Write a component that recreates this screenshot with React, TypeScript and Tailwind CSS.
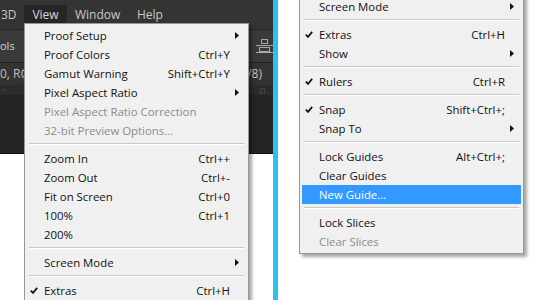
import React from "react";

type Item =
  | { sep: true }
  | {
      sep?: false;
      label: string;
      shortcut?: string;
      arrow?: boolean;
      check?: boolean;
      disabled?: boolean;
      active?: boolean;
    };

const Check = () => (
  <svg width="8" height="7" viewBox="0 0 8 7" className="block">
    <path d="M0.8 3.6 L3 5.9 L7.2 0.9" fill="none" stroke="#111" strokeWidth="1.7" />
  </svg>
);

const Arrow = ({ color }: { color: string }) => (
  <svg width="4" height="7" viewBox="0 0 4 7" className="block">
    <polygon points="0,0 4,3.5 0,7" fill={color} />
  </svg>
);

function MenuRow({ item }: { item: Item }) {
  if (item.sep) {
    return (
      <div className="h-[9px] px-[2px] pt-[3px]">
        <div className="h-[2px] border-t border-[#c8c8c8] border-b border-b-white" />
      </div>
    );
  }
  const color = item.active ? "text-white" : item.disabled ? "text-[#8c8c8c]" : "text-[#111]";
  return (
    <div
      className={`relative flex h-[19px] items-center ${item.active ? "bg-[#3399ff]" : ""} ${color}`}
    >
      <div className="flex w-[17px] justify-end pr-[6px]">{item.check ? <Check /> : null}</div>
      <span className="flex-1 whitespace-nowrap">{item.label}</span>
      {item.shortcut ? <span className="mr-[16px] whitespace-nowrap">{item.shortcut}</span> : null}
      {item.arrow ? (
        <span className="mr-[7px]">
          <Arrow color={item.active ? "#fff" : "#111"} />
        </span>
      ) : null}
    </div>
  );
}

function Menu({ items }: { items: Item[] }) {
  return (
    <div
      className="w-[225px] border border-[#979797] bg-[#f0f0f0] p-[2px] text-[11.4px] shadow-[3px_3px_3px_rgba(0,0,0,0.35)]"
      style={{ fontFamily: '"Open Sans", "Noto Sans", sans-serif' }}
    >
      {items.map((it, i) => (
        <MenuRow key={i} item={it} />
      ))}
    </div>
  );
}

const leftItems: Item[] = [
  { label: "Proof Setup", arrow: true },
  { label: "Proof Colors", shortcut: "Ctrl+Y" },
  { label: "Gamut Warning", shortcut: "Shift+Ctrl+Y" },
  { label: "Pixel Aspect Ratio", arrow: true },
  { label: "Pixel Aspect Ratio Correction", disabled: true },
  { label: "32-bit Preview Options...", disabled: true },
  { sep: true },
  { label: "Zoom In", shortcut: "Ctrl++" },
  { label: "Zoom Out", shortcut: "Ctrl+-" },
  { label: "Fit on Screen", shortcut: "Ctrl+0" },
  { label: "100%", shortcut: "Ctrl+1" },
  { label: "200%" },
  { sep: true },
  { label: "Screen Mode", arrow: true },
  { sep: true },
  { label: "Extras", shortcut: "Ctrl+H", check: true },
];

const rightItems: Item[] = [
  { label: "Screen Mode", arrow: true },
  { sep: true },
  { label: "Extras", shortcut: "Ctrl+H", check: true },
  { label: "Show", arrow: true },
  { sep: true },
  { label: "Rulers", shortcut: "Ctrl+R", check: true },
  { sep: true },
  { label: "Snap", shortcut: "Shift+Ctrl+;", check: true },
  { label: "Snap To", arrow: true },
  { sep: true },
  { label: "Lock Guides", shortcut: "Alt+Ctrl+;" },
  { label: "Clear Guides" },
  { label: "New Guide...", active: true },
  { sep: true },
  { label: "Lock Slices" },
  { label: "Clear Slices", disabled: true },
];

export default function App() {
  return (
    <div
      className="flex h-[300px] w-[550px] overflow-hidden bg-white"
      style={{ fontFamily: '"Open Sans", "Noto Sans", sans-serif' }}
    >
      {/* Left screenshot */}
      <div className="relative w-[273px] shrink-0 bg-white">
        <div className="flex h-[154px] flex-col bg-[#242424]">
          {/* menu bar */}
          <div className="flex h-[30px] items-center border-b border-[#272727] bg-[#343434] text-[12px] text-[#c9c9c9]">
            <span className="w-[24px] whitespace-nowrap pl-[1px]">3D</span>
            <span className="flex h-[19px] w-[43px] items-center justify-center bg-[#262626] text-[#d8d8d8]">
              View
            </span>
            <span className="ml-[8px] w-[62px] whitespace-nowrap">Window</span>
            <span className="whitespace-nowrap">Help</span>
          </div>
          {/* tool options bar */}
          <div className="flex h-[33px] items-center justify-between border-b border-[#222] bg-[#3a3a3a] text-[11px] text-[#d4d4d4]">
            <span className="whitespace-nowrap">ols</span>
            <svg width="17" height="14" viewBox="0 0 17 14">
              <g fill="none" stroke="#a8a8a8" strokeWidth="1">
                <rect x="5.5" y="0.5" width="6" height="4" />
                <line x1="0" y1="6.5" x2="17" y2="6.5" />
                <rect x="3.5" y="8.5" width="10" height="4" />
                <line x1="0" y1="13.5" x2="17" y2="13.5" />
              </g>
            </svg>
          </div>
          {/* document tab */}
          <div className="flex h-[22px] items-center justify-between bg-[#333333] pr-[11px] text-[12px] text-[#bdbdbd]">
            <span className="whitespace-nowrap">0, RG</span>
            <span className="text-[#c9c2b4]">/8)</span>
          </div>
          {/* ruler */}
          <div className="flex h-[10px] items-center border-t border-[#2a2a2a] bg-[#2c2c2c] pl-[2px] text-[8px] text-[#4a4a4a]">
            <span>?</span>
            <span className="ml-auto mr-[8px] h-[6px] w-[5px] border border-[#444]" />
          </div>
          {/* canvas area */}
          <div className="flex-1 border-b border-[#111] bg-[#242424]" />
        </div>

        <div className="absolute left-[24px] top-[23px]">
          <Menu items={leftItems} />
        </div>
      </div>

      {/* cyan divider */}
      <div className="w-[5px] shrink-0 bg-[#27c3ec]" />

      {/* Right screenshot */}
      <div className="flex-1 bg-white pl-[21px]">
        <div className="-mt-[6px]">
          <Menu items={rightItems} />
        </div>
      </div>
    </div>
  );
}
